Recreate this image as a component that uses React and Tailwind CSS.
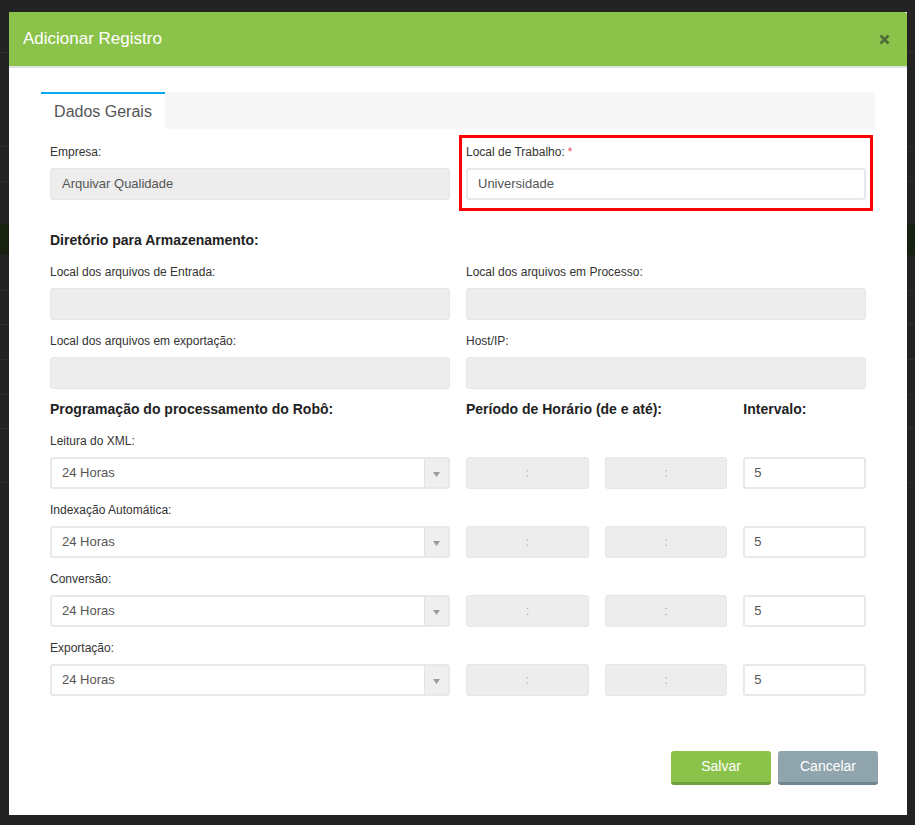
import React from 'react';

const FONT = { fontFamily: '"Liberation Sans", Arial, sans-serif' };

function Label({ children, required }) {
  return (
    <div className="text-[12px] leading-[14px] mb-[9px] text-[#333]">
      {children}
      {required && <span className="text-[#e84c64] ml-[3px]">*</span>}
    </div>
  );
}

function Field({ value = '', white }) {
  return (
    <div
      className={
        'h-[32px] rounded-[3px] flex items-center text-[13px] text-[#555] ' +
        (white ? 'bg-white border-2 border-[#e6e9ec] px-[10px]' : 'bg-[#ededed] border border-[#e6e6e6] px-[11px]')
      }
    >
      {value}
    </div>
  );
}

function SelectBox({ value }) {
  return (
    <div className="h-[32px] rounded-[3px] border-2 border-[#e6e9ec] bg-white flex text-[13px] text-[#555]">
      <div className="flex-1 flex items-center px-[10px]">{value}</div>
      <div className="w-[24px] bg-[#efefef] border-l border-[#e3e3e3] flex items-center justify-center">
        <svg width="7" height="5" viewBox="0 0 7 5" className="mt-[3px]">
          <path d="M0 0h7L3.5 5z" fill="#9a9a9a" />
        </svg>
      </div>
    </div>
  );
}

function TimeBox() {
  return (
    <div className="h-[32px] rounded-[3px] bg-[#ededed] border border-[#e6e6e6] flex items-center justify-center text-[12px] text-[#b0a8a8]">
      :
    </div>
  );
}

const rows = ['Leitura do XML:', 'Indexação Automática:', 'Conversão:', 'Exportação:'];

export default function App() {
  return (
    <div className="relative w-[915px] h-[825px] overflow-hidden bg-[#232323]" style={FONT}>
      {/* backdrop page */}
      <div className="flex flex-col">
        <div className="h-[53px] border-b border-[#2e2e2e]" />
        <div className="h-[94px] border-b border-[#2e2e2e]" />
        <div className="h-[35px] border-b border-[#2e2e2e]" />
        <div className="h-[42px]" />
        <div className="h-[31px] bg-[#18200f]" />
        <div className="h-[36px] border-b border-[#2e2e2e]" />
        <div className="h-[34px] border-b border-[#2e2e2e]" />
        <div className="h-[35px] border-b border-[#2e2e2e]" />
        <div className="h-[35px] border-b border-[#2e2e2e]" />
        <div className="h-[34px] border-b border-[#2e2e2e]" />
        <div className="h-[54px] border-b border-[#2e2e2e]" />
      </div>

      {/* modal */}
      <div className="absolute left-[9px] top-[12px] w-[898px] h-[803px] bg-white flex flex-col">
        <div className="h-[54px] bg-[#8bc34a] flex items-center justify-between pl-[14px] pr-[17px] rounded-tr-[3px]">
          <h2 className="text-white text-[17px]">Adicionar Registro</h2>
          <svg width="11" height="11" viewBox="0 0 11 11">
            <path d="M1.5 1.5l8 8M9.5 1.5l-8 8" stroke="#4f6b35" strokeWidth="2.6" />
          </svg>
        </div>
        <div className="h-[2px] bg-[#dfe3e6]" />

        <div className="px-[32px] pt-[24px] flex-1 flex flex-col">
          {/* tabs */}
          <div className="h-[37px] bg-[#f7f7f7] flex">
            <div className="w-[124px] bg-white border-t-2 border-[#03a9f4] flex items-center justify-center text-[16px] text-[#555]">
              Dados Gerais
            </div>
          </div>

          <div className="px-[9px] pt-[16px]">
            <div className="grid grid-cols-2 gap-x-[16px]">
              <div>
                <Label>Empresa:</Label>
                <Field value="Arquivar Qualidade" />
              </div>
              <div className="relative">
                <Label required>Local de Trabalho:</Label>
                <Field value="Universidade" white />
                <div className="absolute -left-[7px] -top-[10px] -right-[7px] -bottom-[11px] border-[3px] border-[#ff0000]" />
              </div>
            </div>

            <h3 className="mt-[32px] text-[14px] leading-[16px] font-bold text-[#222]">Diretório para Armazenamento:</h3>

            <div className="grid grid-cols-2 gap-x-[16px] gap-y-[14px] mt-[17px]">
              <div>
                <Label>Local dos arquivos de Entrada:</Label>
                <Field />
              </div>
              <div>
                <Label>Local dos arquivos em Processo:</Label>
                <Field />
              </div>
              <div>
                <Label>Local dos arquivos em exportação:</Label>
                <Field />
              </div>
              <div>
                <Label>Host/IP:</Label>
                <Field />
              </div>
            </div>

            <div className="grid grid-cols-2 gap-x-[16px] mt-[12px] text-[14px] leading-[16px] font-bold text-[#222]">
              <h3>Programação do processamento do Robô:</h3>
              <div className="grid grid-cols-3 gap-x-[16px]">
                <h3 className="col-span-2">Período de Horário (de e até):</h3>
                <h3>Intervalo:</h3>
              </div>
            </div>

            <div className="flex flex-col gap-y-[14px] mt-[17px]">
              {rows.map((r) => (
                <div key={r} className="grid grid-cols-2 gap-x-[16px]">
                  <div>
                    <Label>{r}</Label>
                    <SelectBox value="24 Horas" />
                  </div>
                  <div className="pt-[23px] grid grid-cols-3 gap-x-[16px]">
                    <TimeBox />
                    <TimeBox />
                    <div className="h-[32px] rounded-[3px] bg-white border-2 border-[#e6e9ec] pl-[9px] flex items-center text-[13px] text-[#555]">
                      5
                    </div>
                  </div>
                </div>
              ))}
            </div>
          </div>

          <div className="mt-auto mb-[30px] flex justify-end gap-[7px] -mr-[3px]">
            <button className="w-[100px] h-[34px] rounded-[3px] bg-[#8bc34a] border-b-[3px] border-[#6f9f3a] text-white text-[14px]">
              Salvar
            </button>
            <button className="w-[100px] h-[34px] rounded-[3px] bg-[#90a4ae] border-b-[3px] border-[#6f8691] text-white text-[14px]">
              Cancelar
            </button>
          </div>
        </div>
      </div>
    </div>
  );
}
